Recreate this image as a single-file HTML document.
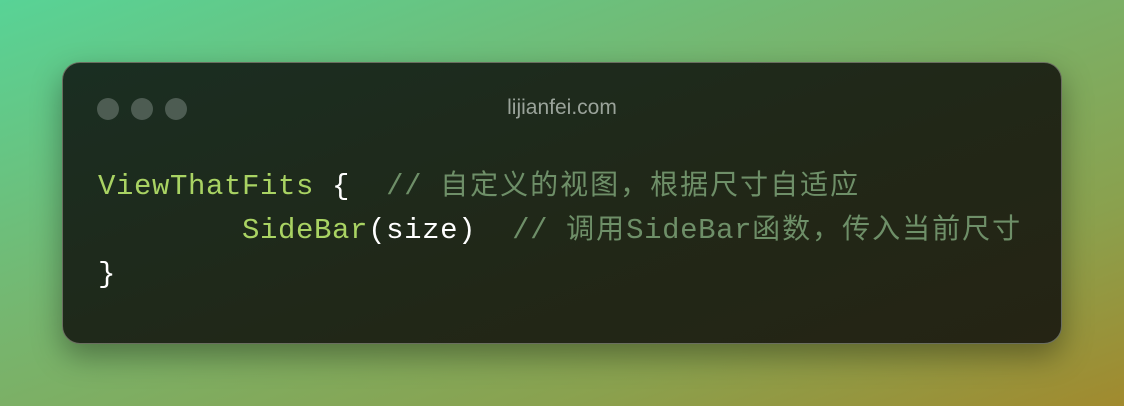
<!DOCTYPE html>
<html><head><meta charset="utf-8"><style>
html,body{margin:0;padding:0}
body{width:1124px;height:406px;overflow:hidden;background:linear-gradient(160deg,#58d396 0%,#76b66f 40%,#8aa14e 75%,#a18a2e 100%);position:relative;font-family:"Liberation Mono","Noto Sans CJK SC",monospace}
.card{position:absolute;left:62px;top:62px;width:998px;height:280px;border-radius:18px;border:1px solid #6a6e60;background:linear-gradient(160deg,#1a2e22 0%,#212717 60%,#252414 100%);box-shadow:0 12px 30px rgba(0,0,0,.35)}
.dot{position:absolute;top:35px;width:22px;height:22px;border-radius:50%;background:#4d5c52}
.title{position:absolute;left:0;right:0;top:33px;text-align:center;font-family:"Liberation Sans",sans-serif;font-size:21px;color:#9aa39a}
.code{position:absolute;left:35px;top:102px;font-size:29px;letter-spacing:0.6px;line-height:43px;white-space:pre;color:#fff}
.k{color:#a9d363}.c{color:#6e8f68}.z{letter-spacing:2px;font-size:28px}
</style></head><body>
<div class="card">
<div class="dot" style="left:34px"></div><div class="dot" style="left:68px"></div><div class="dot" style="left:102px"></div>
<div class="title">lijianfei.com</div>
<div class="code"><span class="k">ViewThatFits</span> {  <span class="c">// <span class="z">自定义的视图，根据尺寸自适应</span></span>
        <span class="k">SideBar</span>(size)  <span class="c">// <span class="z">调用</span>SideBar<span class="z">函数，传入当前尺寸</span></span>
}</div>
</div>
</body></html>
